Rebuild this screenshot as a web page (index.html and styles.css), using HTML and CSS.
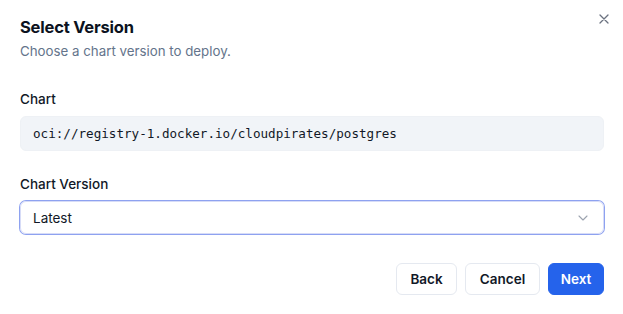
FILE: index.html
```html
<!DOCTYPE html>
<html>
<head>
<meta charset="utf-8">
<link rel="stylesheet" href="styles.css">
</head>
<body>
<div class="dialog">
  <button class="close" aria-label="Close">
    <svg width="10" height="10" viewBox="0 0 10 10"><path d="M1 1L9 9M9 1L1 9" stroke="#6b7280" stroke-width="1.3" stroke-linecap="round"/></svg>
  </button>
  <header class="head">
    <h2 class="title">Select Version</h2>
    <p class="desc">Choose a chart version to deploy.</p>
  </header>
  <div class="field field-chart">
    <label class="label">Chart</label>
    <div class="code">oci://registry-1.docker.io/cloudpirates/postgres</div>
  </div>
  <div class="field field-version">
    <label class="label">Chart Version</label>
    <div class="select">
      <span>Latest</span>
      <svg width="10" height="6" viewBox="0 0 10 6"><path d="M1 1L5 5L9 1" fill="none" stroke="#9ca3af" stroke-width="1.1" stroke-linecap="round" stroke-linejoin="round"/></svg>
    </div>
  </div>
  <footer class="actions">
    <button class="btn btn-outline btn-back">Back</button>
    <button class="btn btn-outline btn-cancel">Cancel</button>
    <button class="btn btn-primary btn-next">Next</button>
  </footer>
</div>
</body>
</html>
```

FILE: styles.css
```css
* { box-sizing: border-box; }
html, body { margin: 0; padding: 0; background: #ffffff; }
body {
  font-family: "Inter", "Noto Sans", sans-serif;
  color: #0f172a;
  width: 623px;
  height: 314px;
  overflow: hidden;
}
.dialog {
  position: relative;
  padding: 15px 19px 0 20px;
  display: flex;
  flex-direction: column;
}
.close {
  position: absolute;
  top: 14px;
  right: 14px;
  width: 10px;
  height: 10px;
  padding: 0;
  border: 0;
  background: none;
  display: flex;
}
.head { display: flex; flex-direction: column; gap: 2px; }
.title {
  margin: 0;
  font-size: 16.5px;
  line-height: 24px;
  font-weight: 700;
  color: #0b1220;
  letter-spacing: -0.2px;
}
.desc {
  margin: 0;
  font-size: 13.3px;
  line-height: 20px;
  color: #64748b;
}
.field { display: flex; flex-direction: column; gap: 8px; }
.field-chart { margin-top: 29px; }
.field-version { margin-top: 24px; }
.label {
  font-size: 13.5px;
  line-height: 18px;
  font-weight: 500;
  color: #111827;
}
.code {
  height: 35px;
  background: #f1f4f8;
  border: 1px solid #eef1f5;
  border-radius: 6px;
  padding: 0 12px;
  display: flex;
  align-items: center;
  font-family: "DejaVu Sans Mono", monospace;
  font-size: 12.6px;
  color: #111827;
}
.select {
  height: 33px;
  border: 1px solid #d7dcf7;
  box-shadow: 0 0 0 1px #8ea2f0;
  border-radius: 6px;
  padding: 0 15px 0 12px;
  display: flex;
  align-items: center;
  justify-content: space-between;
  font-size: 13.5px;
  color: #111827;
}
.actions {
  margin-top: 29px;
  display: flex;
  justify-content: flex-end;
  gap: 8px;
}
.btn {
  height: 32px;
  border-radius: 6px;
  font-family: inherit;
  font-size: 13.5px;
  font-weight: 600;
  padding: 0;
  display: flex;
  align-items: center;
  justify-content: center;
}
.btn-outline {
  background: #ffffff;
  border: 1px solid #e5e9f0;
  color: #111827;
}
.btn-back { width: 61px; }
.btn-cancel { width: 75px; }
.btn-primary {
  background: #2563eb;
  border: 1px solid #2563eb;
  color: #ffffff;
  width: 56px;
}
```
